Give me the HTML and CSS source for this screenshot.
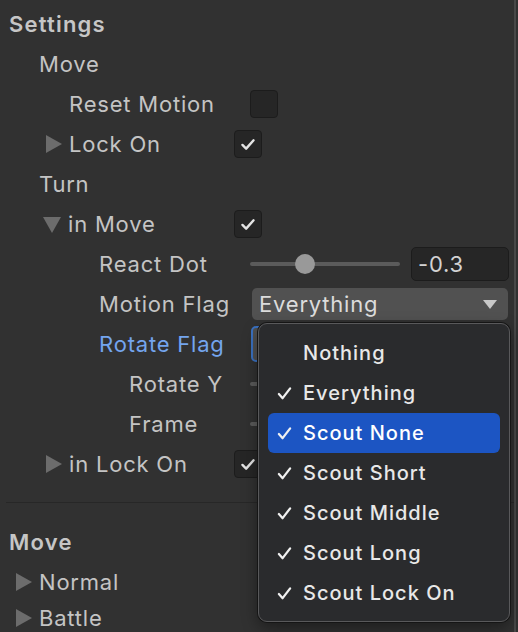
FILE: index.html
```html
<!DOCTYPE html>
<html>
<head>
<meta charset="utf-8">
<link rel="stylesheet" href="styles.css">
</head>
<body>
<div class="panel">
  <div class="row"><span class="label header">Settings</span></div>
  <div class="row"><span class="label i1">Move</span></div>
  <div class="row">
    <span class="label i2">Reset Motion</span>
    <span class="checkbox"></span>
  </div>
  <div class="row">
    <span class="label i2 fold"><span class="tri-right"></span>Lock On</span>
    <span class="checkbox shift"><svg viewBox="0 0 28 28"><polyline points="8,15 12,19 20,10"/></svg></span>
  </div>
  <div class="row"><span class="label i1">Turn</span></div>
  <div class="row">
    <span class="label i2 fold"><span class="tri-down"></span>in Move</span>
    <span class="checkbox shift"><svg viewBox="0 0 28 28"><polyline points="8,15 12,19 20,10"/></svg></span>
  </div>
  <div class="row">
    <span class="label i3">React Dot</span>
    <div class="slider"><div class="track"></div><div class="knob" style="left: 45px"></div></div>
    <span class="number">-0.3</span>
  </div>
  <div class="row">
    <span class="label i3">Motion Flag</span>
    <div class="dropdown"><span>Everything</span><span class="dd-arrow"></span></div>
  </div>
  <div class="row">
    <span class="label i3 focus">Rotate Flag</span>
    <div class="dropdown focused"></div>
  </div>
  <div class="row">
    <span class="label i4">Rotate Y</span>
    <div class="slider"><div class="track"></div></div>
  </div>
  <div class="row">
    <span class="label i4">Frame</span>
    <div class="slider"><div class="track"></div></div>
  </div>
  <div class="row">
    <span class="label i2 fold"><span class="tri-right"></span>in Lock On</span>
    <span class="checkbox shift"><svg viewBox="0 0 28 28"><polyline points="8,15 12,19 20,10"/></svg></span>
  </div>
  <div class="separator"></div>
  <div class="row"><span class="label header">Move</span></div>
  <div class="row"><span class="label i1 fold"><span class="tri-right small"></span>Normal</span></div>
  <div class="row last"><span class="label i1 fold"><span class="tri-right small"></span>Battle</span></div>

  <div class="menu">
    <div class="item"><span class="mark"></span>Nothing</div>
    <div class="item"><span class="mark"><svg viewBox="0 0 16 16"><polyline points="2,8.5 6,13 14,2.5"/></svg></span>Everything</div>
    <div class="item selected"><span class="mark"><svg viewBox="0 0 16 16"><polyline points="2,8.5 6,13 14,2.5"/></svg></span>Scout None</div>
    <div class="item"><span class="mark"><svg viewBox="0 0 16 16"><polyline points="2,8.5 6,13 14,2.5"/></svg></span>Scout Short</div>
    <div class="item"><span class="mark"><svg viewBox="0 0 16 16"><polyline points="2,8.5 6,13 14,2.5"/></svg></span>Scout Middle</div>
    <div class="item"><span class="mark"><svg viewBox="0 0 16 16"><polyline points="2,8.5 6,13 14,2.5"/></svg></span>Scout Long</div>
    <div class="item"><span class="mark"><svg viewBox="0 0 16 16"><polyline points="2,8.5 6,13 14,2.5"/></svg></span>Scout Lock On</div>
  </div>
</div>
</body>
</html>
```

FILE: styles.css
```css
html, body {
  margin: 0;
  padding: 0;
  background: #313131;
  height: 100%;
  overflow: hidden;
}

.panel {
  position: relative;
  width: 516px;
  height: 632px;
  border-right: 2px solid #484848;
  padding-top: 4px;
  box-sizing: border-box;
  font-family: "Inter", "Noto Sans", sans-serif;
  font-size: 22px;
  letter-spacing: 0.8px;
  color: #c4c4c4;
}

.row {
  display: flex;
  align-items: center;
  height: 40px;
}

.row.last {
  height: 32px;
}

.label {
  display: flex;
  align-items: center;
  width: 250px;
  flex: none;
  box-sizing: border-box;
  white-space: nowrap;
  line-height: 40px;
}

.header {
  padding-left: 9px;
  font-weight: 600;
  color: #c6c6c6;
  letter-spacing: 1.2px;
}

.i1 { padding-left: 39px; }
.i2 { padding-left: 69px; }
.i3 { padding-left: 99px; }
.i4 { padding-left: 129px; }

.i2.fold { padding-left: 43px; }
.i1.fold { padding-left: 15px; }

.focus { color: #74a5ee; }

.tri-right {
  width: 0;
  height: 0;
  border-top: 9px solid transparent;
  border-bottom: 9px solid transparent;
  border-left: 16px solid #6c6c6c;
  margin-left: 3px;
  margin-right: 7px;
}

.tri-right.small {
  margin-left: 1px;
  margin-right: 7px;
}

.tri-down {
  width: 0;
  height: 0;
  border-left: 9.5px solid transparent;
  border-right: 9.5px solid transparent;
  border-top: 16px solid #6c6c6c;
  margin-right: 7px;
  margin-top: 2px;
}

.checkbox {
  width: 28px;
  height: 28px;
  box-sizing: border-box;
  background: #262626;
  border: 1px solid #1c1c1c;
  border-radius: 4px;
  display: flex;
}

.checkbox.shift {
  margin-left: -16px;
}

.checkbox svg {
  width: 26px;
  height: 26px;
}

.checkbox polyline {
  fill: none;
  stroke: #e4e4e4;
  stroke-width: 2.6;
  stroke-linecap: round;
  stroke-linejoin: round;
}

.slider {
  position: relative;
  width: 150px;
  height: 40px;
  flex: none;
}

.track {
  position: absolute;
  left: 0;
  right: 0;
  top: 18px;
  height: 4px;
  border-radius: 2px;
  background: #5b5b5b;
}

.knob {
  position: absolute;
  top: 10px;
  width: 20px;
  height: 20px;
  border-radius: 50%;
  background: #999999;
}

.number {
  margin-left: 11px;
  width: 98px;
  height: 34px;
  box-sizing: border-box;
  background: #262626;
  border: 1px solid #1c1c1c;
  border-radius: 5px;
  padding-left: 6px;
  line-height: 32px;
  color: #d2d2d2;
}

.dropdown {
  margin-left: 2px;
  width: 256px;
  height: 32px;
  box-sizing: border-box;
  background: #515151;
  border-radius: 5px;
  display: flex;
  align-items: center;
  justify-content: space-between;
  padding: 0 11px 0 7px;
  color: #dcdcdc;
}

.dropdown.focused {
  margin-left: 1px;
  height: 36px;
  border: 2px solid #3b72c2;
}

.dd-arrow {
  width: 0;
  height: 0;
  border-left: 7px solid transparent;
  border-right: 7px solid transparent;
  border-top: 9px solid #c8c8c8;
}

.separator {
  height: 1px;
  background: #272727;
  margin: 18px 0 19px 6px;
}

.menu {
  position: absolute;
  left: 258px;
  top: 323px;
  width: 252px;
  height: 299px;
  box-sizing: border-box;
  background: #2a2b2d;
  border: 1px solid #59595b;
  border-radius: 9px;
  box-shadow: 0 0 0 1px #151515, 0 6px 16px rgba(0, 0, 0, 0.4);
  padding: 9px 9px 10px 9px;
  font-family: "Inter", "Noto Sans", sans-serif;
  font-size: 20px;
  font-weight: 500;
  letter-spacing: 1px;
  color: #e8e8e8;
}

.item {
  display: flex;
  align-items: center;
  height: 40px;
  border-radius: 6px;
  padding-left: 9px;
}

.item.selected {
  background: #1c55c3;
  color: #ffffff;
}

.mark {
  width: 15px;
  height: 15px;
  margin-right: 11px;
  display: flex;
}

.mark svg {
  width: 15px;
  height: 15px;
}

.mark polyline {
  fill: none;
  stroke: #f0f0f0;
  stroke-width: 2.4;
  stroke-linecap: round;
  stroke-linejoin: round;
}
```
